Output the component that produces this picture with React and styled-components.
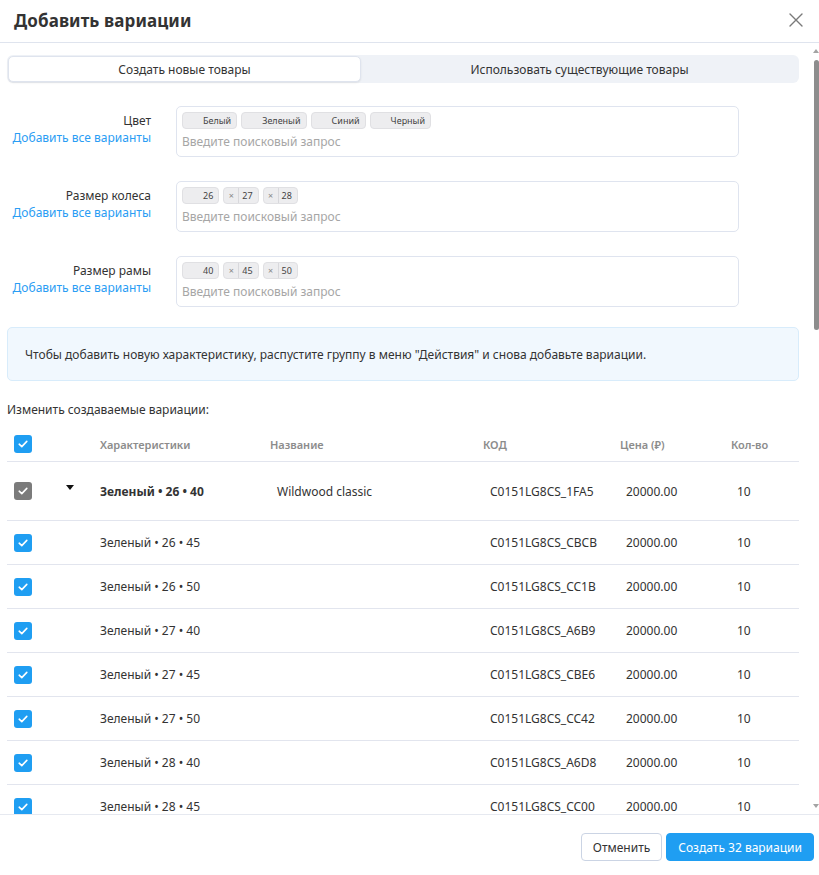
import React from "react";
import styled, { createGlobalStyle } from "styled-components";

const Global = createGlobalStyle`
  html, body { margin: 0; padding: 0; height: 100%; background: #fff; }
  body { font-family: "Noto Sans", "Open Sans", sans-serif; color: #333; font-size: 12px; }
  #root { height: 100%; }
  * { box-sizing: border-box; }
`;

const Modal = styled.div`
  height: 100vh;
  display: flex;
  flex-direction: column;
  background: #fff;
`;

const Header = styled.div`
  height: 43px;
  flex: none;
  display: flex;
  align-items: center;
  justify-content: space-between;
  padding: 0 14px 2px 14px;
  border-bottom: 1px solid #dfe4ee;
`;

const Title = styled.h1`
  margin: 0;
  font-size: 17px;
  font-weight: 700;
  color: #333;
  letter-spacing: 0.1px;
`;

const Close = styled.button`
  border: none;
  background: none;
  padding: 0;
  width: 16px;
  height: 16px;
  display: flex;
  align-items: center;
  justify-content: center;
  cursor: pointer;
  margin-right: 1px;
`;

const BodyWrap = styled.div`
  flex: 1;
  min-height: 0;
  position: relative;
`;

const Body = styled.div`
  height: 100%;
  overflow-y: scroll;
  padding: 12px 20px 24px 7px;
  scrollbar-width: none;
  &::-webkit-scrollbar { display: none; }
`;

const ScrollThumb = styled.div`
  position: absolute;
  right: 0;
  top: 17px;
  width: 5px;
  height: 270px;
  background: #8d8d8d;
  border-radius: 3px;
`;

const ScrollArrow = styled.div`
  position: absolute;
  right: 0;
  width: 0;
  height: 0;
  border-left: 3px solid transparent;
  border-right: 3px solid transparent;
  ${(p) =>
    p.$down
      ? "bottom: 6px; border-top: 4px solid #a3a3a3;"
      : "top: 6px; border-bottom: 4px solid #a3a3a3;"}
`;

const Tabs = styled.div`
  display: grid;
  grid-template-columns: 353px 1fr;
  height: 28px;
  background: #eff2f7;
  border-radius: 6px;
  padding: 1px;
  margin-bottom: 23px;
`;

const Tab = styled.button`
  border: ${(p) => (p.$active ? "1px solid #dfe4ee" : "1px solid transparent")};
  background: ${(p) => (p.$active ? "#fff" : "transparent")};
  box-shadow: ${(p) => (p.$active ? "0 1px 2px rgba(0,0,0,0.08)" : "none")};
  border-radius: 5px;
  font-family: inherit;
  font-size: 12px;
  color: #333;
  padding: 0;
  cursor: pointer;
`;

const FieldRow = styled.div`
  display: grid;
  grid-template-columns: 144px 1fr;
  column-gap: 25px;
  margin-bottom: ${(p) => (p.$last ? "20px" : "24px")};
`;

const LabelCol = styled.div`
  display: flex;
  flex-direction: column;
  align-items: flex-end;
  padding-top: 6px;
  line-height: 17px;
`;

const FieldLabel = styled.span`
  color: #333;
  font-size: 12px;
`;

const AddAll = styled.a`
  color: #2a9df4;
  font-size: 12px;
  cursor: pointer;
`;

const TagInput = styled.div`
  width: 563px;
  height: 51px;
  border: 1px solid #dfe4ef;
  border-radius: 5px;
  padding: 5px 5px 0 5px;
  display: flex;
  flex-direction: column;
  gap: 3px;
`;

const Chips = styled.div`
  display: flex;
  gap: 4px;
`;

const Chip = styled.span`
  display: inline-flex;
  align-items: stretch;
  height: 17px;
  border: 1px solid #e0e0e3;
  background: #ededef;
  border-radius: 4px;
  font-size: 9px;
  color: #444;
  line-height: 15px;
`;

const ChipRemove = styled.span`
  width: ${(p) => p.$w}px;
  display: flex;
  align-items: center;
  justify-content: center;
  font-size: 9px;
  color: #888;
  border-right: 1px solid ${(p) => (p.$visible ? "#d8d8dc" : "transparent")};
`;

const ChipText = styled.span`
  padding: 0 5px 0 ${(p) => p.$pl}px;
`;

const Placeholder = styled.input`
  border: none;
  outline: none;
  padding: 0;
  height: 19px;
  font-family: inherit;
  font-size: 12px;
  color: #333;
  &::placeholder { color: #a6a6a6; }
`;

const Info = styled.div`
  height: 54px;
  background: #f1f8fe;
  border: 1px solid #d8ecfb;
  border-radius: 5px;
  display: flex;
  align-items: center;
  padding: 0 16px 0 17px;
  font-size: 12px;
  color: #333;
  margin-bottom: 20px;
`;

const Caption = styled.div`
  font-size: 12px;
  line-height: 18px;
  color: #333;
  margin-bottom: 8px;
`;

const Row = styled.div`
  display: grid;
  grid-template-columns: 48px 45px 170px 213px 137px 111px 1fr;
  align-items: center;
  height: ${(p) => p.$h}px;
  border-bottom: 1px solid #e2e5ee;
  font-size: 12px;
`;

const HeadCell = styled.div`
  color: #8c8c8c;
  font-weight: 600;
  font-size: 11px;
`;

const Cell = styled.div`
  padding-left: ${(p) => p.$indent || 0}px;
  font-weight: ${(p) => (p.$bold ? 700 : 400)};
  color: #333;
  white-space: nowrap;
`;

const CheckCell = styled.div`
  padding-left: 7px;
  display: flex;
  align-items: center;
`;

const Box = styled.span`
  width: 18px;
  height: 18px;
  border-radius: 3px;
  background: ${(p) => (p.$gray ? "#7b7b7b" : "#1f9ef2")};
  display: inline-flex;
  align-items: center;
  justify-content: center;
`;

const Caret = styled.span`
  display: flex;
  justify-content: center;
  padding-right: 15px;
  margin-top: -7px;
`;

const Footer = styled.div`
  flex: none;
  height: 61px;
  border-top: 1px solid #e6e9f0;
  display: flex;
  justify-content: flex-end;
  align-items: flex-start;
  gap: 4px;
  padding: 18px 5px 0 0;
`;

const Button = styled.button`
  height: 28px;
  padding: 0 11px;
  border-radius: 4px;
  font-family: inherit;
  font-size: 12px;
  cursor: pointer;
  border: 1px solid ${(p) => (p.$primary ? "#1f9ef2" : "#cbd4e4")};
  background: ${(p) => (p.$primary ? "#1f9ef2" : "#fff")};
  color: ${(p) => (p.$primary ? "#fff" : "#333")};
`;

const Check = ({ gray }) => (
  <Box $gray={gray}>
    <svg width="12" height="12" viewBox="0 0 12 12">
      <path d="M2.2 6.2 L4.8 8.6 L9.8 3.4" fill="none" stroke="#fff" strokeWidth="1.6" strokeLinecap="round" strokeLinejoin="round" />
    </svg>
  </Box>
);

const fields = [
  { label: "Цвет", chips: ["Белый", "Зеленый", "Синий", "Черный"], all: true },
  { label: "Размер колеса", chips: ["26", "27", "28"] },
  { label: "Размер рамы", chips: ["40", "45", "50"] },
];

const codes = {
  "26 • 45": "C0151LG8CS_CBCB",
  "26 • 50": "C0151LG8CS_CC1B",
  "27 • 40": "C0151LG8CS_A6B9",
  "27 • 45": "C0151LG8CS_CBE6",
  "27 • 50": "C0151LG8CS_CC42",
  "28 • 40": "C0151LG8CS_A6D8",
  "28 • 45": "C0151LG8CS_CC00",
  "28 • 50": "C0151LG8CS_CC31",
};

const colorOrder = ["Зеленый", "Белый", "Синий", "Черный"];
const combos = [];
["26", "27", "28"].forEach((w) => ["40", "45", "50"].forEach((f) => combos.push(`${w} • ${f}`)));

const hex = ["1FA5", "B2C4", "A7D1", "C3E8", "D4F2", "E5A3", "F6B1", "A8C7", "B9D3"];

export default function App() {
  const groups = colorOrder.map((color, gi) => ({
    color,
    head: `${color} • ${combos[0]}`,
    headCode: `C0151LG8CS_${gi === 0 ? "1FA5" : hex[gi]}`,
    children: combos.slice(1).map((c, i) => ({
      name: `${color} • ${c}`,
      code: gi === 0 ? codes[c] : `C0151LG8CS_${hex[(i + gi) % hex.length]}`,
    })),
  }));

  return (
    <Modal>
      <Global />
      <Header>
        <Title>Добавить вариации</Title>
        <Close aria-label="Закрыть">
          <svg width="14" height="14" viewBox="0 0 14 14">
            <path d="M1 1 L13 13 M13 1 L1 13" stroke="#7a7a7a" strokeWidth="1.4" strokeLinecap="round" />
          </svg>
        </Close>
      </Header>
      <BodyWrap>
        <Body>
          <Tabs>
            <Tab $active>Создать новые товары</Tab>
            <Tab>Использовать существующие товары</Tab>
          </Tabs>
          {fields.map((f, fi) => (
            <FieldRow key={f.label} $last={fi === fields.length - 1}>
              <LabelCol>
                <FieldLabel>{f.label}</FieldLabel>
                <AddAll>Добавить все варианты</AddAll>
              </LabelCol>
              <TagInput>
                <Chips>
                  {f.chips.map((c, i) => {
                    const visible = !f.all && i > 0;
                    return (
                      <Chip key={c}>
                        <ChipRemove $visible={visible} $w={f.all ? 13 : 15}>{visible ? "×" : ""}</ChipRemove>
                        <ChipText $pl={visible ? 3 : f.all ? 7 : 5}>{c}</ChipText>
                      </Chip>
                    );
                  })}
                </Chips>
                <Placeholder placeholder="Введите поисковый запрос" />
              </TagInput>
            </FieldRow>
          ))}
          <Info>Чтобы добавить новую характеристику, распустите группу в меню "Действия" и снова добавьте вариации.</Info>
          <Caption>Изменить создаваемые вариации:</Caption>
          <Row $h={35}>
            <CheckCell><Check /></CheckCell>
            <span />
            <HeadCell>Характеристики</HeadCell>
            <HeadCell>Название</HeadCell>
            <HeadCell>КОД</HeadCell>
            <HeadCell>Цена (₽)</HeadCell>
            <HeadCell>Кол-во</HeadCell>
          </Row>
          {groups.map((g) => (
            <React.Fragment key={g.color}>
              <Row $h={59}>
                <CheckCell><Check gray /></CheckCell>
                <Caret>
                  <svg width="8" height="5" viewBox="0 0 8 5"><path d="M0 0 H8 L4 5 Z" fill="#111" /></svg>
                </Caret>
                <Cell $bold>{g.head}</Cell>
                <Cell $indent={7}>Wildwood classic</Cell>
                <Cell $indent={7}>{g.headCode}</Cell>
                <Cell $indent={6}>20000.00</Cell>
                <Cell $indent={6}>10</Cell>
              </Row>
              {g.children.map((c) => (
                <Row $h={44} key={c.name}>
                  <CheckCell><Check /></CheckCell>
                  <span />
                  <Cell>{c.name}</Cell>
                  <span />
                  <Cell $indent={7}>{c.code}</Cell>
                  <Cell $indent={6}>20000.00</Cell>
                  <Cell $indent={6}>10</Cell>
                </Row>
              ))}
            </React.Fragment>
          ))}
        </Body>
        <ScrollArrow />
        <ScrollThumb />
        <ScrollArrow $down />
      </BodyWrap>
      <Footer>
        <Button>Отменить</Button>
        <Button $primary>Создать 32 вариации</Button>
      </Footer>
    </Modal>
  );
}
